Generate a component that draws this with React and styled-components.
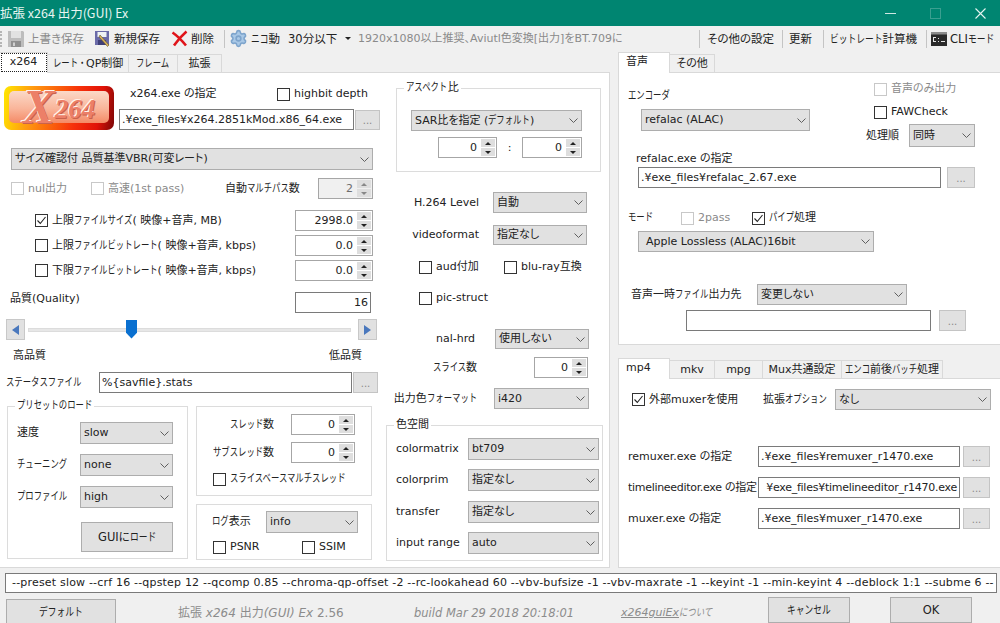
import styled, { createGlobalStyle } from 'styled-components';
import { Settings } from 'lucide-react';

const GlobalStyle = createGlobalStyle`
    * { box-sizing: border-box; }
    html, body {
        margin: 0;
        background: #f0f0f0;
        overflow: hidden;
    }
    body {
        font-family: "DejaVu Sans", "Noto Sans CJK JP", sans-serif;
        font-size: 11px;
        line-height: 14px;
        font-feature-settings: "palt";
        color: #222;
    }
`;

const Window = styled.div`
    width: 1000px;
    height: 623px;
    display: flex;
    flex-direction: column;
    overflow: hidden;
`;

const TitleBar = styled.div`
    height: 26px;
    flex: none;
    background: #008571;
    color: #e8f5f2;
    display: flex;
    align-items: center;
    font-family: "Noto Sans CJK JP", sans-serif;
    font-size: 12.5px;
    white-space: nowrap;
`;
const TitleText = styled.div`
    width: 868px;
    flex: none;
`;
const WinButton = styled.div`
    width: 45px;
    height: 26px;
    flex: none;
    display: flex;
    align-items: center;
    justify-content: center;
`;

const Toolbar = styled.div`
    height: 26px;
    flex: none;
    display: flex;
    align-items: center;
    white-space: nowrap;
    font-size: 11.5px;
    padding-bottom: 1px;
`;
const Grip = styled.div`
    width: 3px;
    height: 16px;
    flex: none;
    border-left: 2px dotted #b5b5b5;
    margin-right: 4px;
`;
const ToolItem = styled.div`
    width: ${(props) => (props.$w ? `${props.$w}px` : 'auto')};
    flex: none;
    display: flex;
    align-items: center;
    gap: 3px;
    margin-left: ${(props) => props.$ml || 0}px;
    color: ${(props) => (props.$dim ? '#8a8a8a' : '#222')};
    font-size: ${(props) => props.$size || 11.5}px;
`;
const ToolSep = styled.div`
    width: 1px;
    height: 18px;
    flex: none;
    background: #c4c4c4;
`;
const Caret = styled.div`
    width: 6px;
    height: 0;
    flex: none;
    border-left: 3px solid transparent;
    border-right: 3px solid transparent;
    border-top: 3px solid #222;
`;

const Main = styled.div`
    display: flex;
    height: 516px;
    flex: none;
`;
const LeftSide = styled.div`
    width: 610px;
    display: flex;
    flex-direction: column;
`;
const RightSide = styled.div`
    width: 382px;
    margin-left: 8px;
    display: flex;
    flex-direction: column;
`;

const TabStrip = styled.div`
    height: 21px;
    flex: none;
    margin-top: ${(props) => props.$mt || 0}px;
    display: flex;
    align-items: flex-end;
    position: relative;
    z-index: 1;
    margin-bottom: -1px;
`;
const Tab = styled.div`
    width: ${(props) => props.$w}px;
    height: ${(props) => (props.$active ? 21 : 19)}px;
    background: ${(props) => (props.$active ? '#fff' : '#f0f0f0')};
    border: 1px solid #d9d9d9;
    border-bottom: ${(props) => (props.$active ? 'none' : '1px solid #d9d9d9')};
    border-left: ${(props) => (props.$first ? 'none' : '1px solid #d9d9d9')};
    margin-right: -1px;
    display: flex;
    align-items: center;
    justify-content: ${(props) => (props.$active ? 'flex-start' : 'center')};
    padding-left: ${(props) => (props.$active ? 7 : 0)}px;
    padding-bottom: ${(props) => (props.$active ? 3 : 0)}px;
    white-space: nowrap;
`;
const FocusTab = styled(Tab)`
    outline: 1px dotted #222;
    outline-offset: -2px;
    justify-content: center;
    padding-left: 0;
    padding-bottom: 2px;
`;
const Panel = styled.div`
    height: ${(props) => props.$h}px;
    flex: none;
    background: #fff;
    border: 1px solid #d9d9d9;
    border-left: ${(props) => (props.$noLeft ? 'none' : '1px solid #d9d9d9')};
    border-right: ${(props) => (props.$noRight ? 'none' : '1px solid #d9d9d9')};
`;
const Columns = styled.div`
    display: flex;
`;
const LeftCol = styled.div`
    width: 385px;
    flex: none;
`;
const MidCol = styled.div`
    width: 224px;
    flex: none;
`;

const Row = styled.div`
    display: flex;
    align-items: ${(props) => props.$align || 'center'};
    height: ${(props) => (props.$h ? `${props.$h}px` : 'auto')};
    margin-top: ${(props) => props.$mt || 0}px;
    padding-left: ${(props) => props.$pl || 0}px;
    padding-right: ${(props) => props.$pr || 0}px;
    padding-bottom: ${(props) => props.$pb || 0}px;
    justify-content: ${(props) => props.$justify || 'flex-start'};
    white-space: nowrap;
`;
const Stack = styled.div`
    width: ${(props) => (props.$w ? `${props.$w}px` : 'auto')};
    flex: none;
    margin-top: ${(props) => props.$mt || 0}px;
    margin-left: ${(props) => props.$ml || 0}px;
`;
const Label = styled.div`
    width: ${(props) => (props.$w ? `${props.$w}px` : 'auto')};
    flex: none;
    text-align: ${(props) => props.$text || 'left'};
    letter-spacing: ${(props) => props.$ls || 0}px;
    color: ${(props) => (props.$dim ? '#8a8a8a' : '#222')};
    white-space: nowrap;
`;

/* Meiryo UI kana are narrow: squeeze the full-width Noto glyphs to match */
const KanaBox = styled.span`
    display: inline-block;
    width: ${(props) => props.$n * 0.76}em;
    white-space: nowrap;
`;
const KanaInner = styled.span`
    display: inline-block;
    font-feature-settings: normal;
    transform: scaleX(0.76);
    transform-origin: left center;
`;
const K = ({ children }) => (
    <KanaBox $n={Array.from(children).length}>
        <KanaInner>{children}</KanaInner>
    </KanaBox>
);

const LogoBox = styled.div`
    width: 110px;
    height: 44px;
    flex: none;
    margin-left: 4px;
    margin-right: 5px;
    padding: 5px 5px 7px;
    border-radius: 7px;
    background: linear-gradient(100deg, #ffe800 0%, #ff9a10 25%, #f6300a 65%, #e01208 85%, #7a0606 100%);
`;
const LogoInner = styled.div`
    height: 100%;
    border-radius: 5px;
    background: linear-gradient(180deg, #fbd9c8 0%, #f9b59a 55%, #f48a66 100%);
    display: flex;
    align-items: center;
    justify-content: center;
    font-family: "Liberation Serif", serif;
    font-style: italic;
    font-weight: 700;
    color: #ec7f68;
    text-shadow: -1px -1px 0 #fff3ec, 1px 1px 0 #c9624c;
    line-height: 1;
`;
const LogoX = styled.span`
    font-size: 48px;
`;
const LogoNum = styled.span`
    font-size: 27px;
    margin-top: 5px;
`;

const Field = styled.div`
    width: ${(props) => props.$w}px;
    height: ${(props) => props.$h || 21}px;
    flex: none;
    background: #fff;
    border: 1px solid #7a7a7a;
    display: flex;
    align-items: center;
    justify-content: ${(props) => (props.$right ? 'flex-end' : 'flex-start')};
    padding: 0 2px;
    letter-spacing: ${(props) => props.$ls || 0}px;
    overflow: hidden;
    white-space: nowrap;
`;
const Browse = styled.div`
    width: ${(props) => props.$w || 25}px;
    height: ${(props) => props.$h || 21}px;
    flex: none;
    margin-left: ${(props) => props.$ml || 1}px;
    background: #e1e1e1;
    border: 1px solid #c4c4c4;
    color: #8a8a8a;
    display: flex;
    justify-content: center;
    align-items: center;
    padding-top: 2px;
    font-size: 10px;
`;
const SelectBox = styled.div`
    width: ${(props) => props.$w}px;
    height: ${(props) => props.$h || 21}px;
    flex: none;
    margin-left: ${(props) => props.$ml || 0}px;
    background: #e1e1e1;
    border: 1px solid #adadad;
    display: flex;
    align-items: center;
    justify-content: space-between;
    padding: 0 3px 0 ${(props) => props.$pad || 3}px;
    white-space: nowrap;
`;
const SpinBox = styled.div`
    width: ${(props) => props.$w}px;
    height: ${(props) => props.$h || 21}px;
    flex: none;
    margin-left: ${(props) => props.$ml || 0}px;
    background: ${(props) => (props.$off ? '#f0f0f0' : '#fff')};
    color: ${(props) => (props.$off ? '#6d6d6d' : '#222')};
    border: 1px solid #a6a6a6;
    display: flex;
    align-items: center;
    justify-content: flex-end;
    white-space: nowrap;
`;
const SpinArrows = styled.div`
    width: 17px;
    height: 100%;
    flex: none;
    margin-left: 2px;
    display: flex;
    flex-direction: column;
    justify-content: center;
    gap: 1px;
    padding: 1px 1px 1px 2px;
`;
const SpinArrow = styled.div`
    flex: 1;
    background: #dedede;
    display: flex;
    align-items: center;
    justify-content: center;
    &::after {
        content: "";
        width: 0;
        height: 0;
        border-left: 3px solid transparent;
        border-right: 3px solid transparent;
        border-${(props) => (props.$down ? 'top' : 'bottom')}: 3px solid ${(props) => (props.$off ? '#888' : '#222')};
    }
`;
const CheckWrap = styled.div`
    width: ${(props) => (props.$w ? `${props.$w}px` : 'auto')};
    flex: none;
    display: flex;
    align-items: center;
    gap: 4px;
    color: ${(props) => (props.$off ? '#8a8a8a' : '#222')};
    white-space: nowrap;
`;
const CheckBox = styled.div`
    width: 13px;
    height: 13px;
    flex: none;
    background: #fff;
    border: 1px solid ${(props) => (props.$off ? '#c8c8c8' : '#333')};
    display: flex;
    align-items: center;
    justify-content: center;
`;

const Group = styled.fieldset`
    width: ${(props) => props.$w}px;
    height: ${(props) => props.$h}px;
    flex: none;
    margin: ${(props) => props.$mt || 0}px 0 0 ${(props) => props.$ml || 0}px;
    padding: 0;
    min-width: 0;
    border: 1px solid #dcdcdc;
`;
const Legend = styled.legend`
    margin-left: 7px;
    padding: 0 2px;
    height: 14px;
    line-height: 14px;
`;
const Box = styled.div`
    width: 176px;
    height: ${(props) => props.$h}px;
    margin-top: ${(props) => props.$mt || 0}px;
    border: 1px solid #dcdcdc;
`;

const ScrollButton = styled.div`
    width: 19px;
    height: 21px;
    flex: none;
    background: #e1e1e1;
    border: 1px solid #c8c8c8;
    display: flex;
    align-items: center;
    justify-content: center;
    &::after {
        content: "";
        width: 0;
        height: 0;
        border-top: 5px solid transparent;
        border-bottom: 5px solid transparent;
        border-${(props) => (props.$right ? 'left' : 'right')}: 7px solid #4a78bd;
    }
`;
const Track = styled.div`
    width: 323px;
    height: 4px;
    flex: none;
    margin: 0 7px 0 3px;
    background: #e7e7e7;
    border: 1px solid #dcdcdc;
    position: relative;
`;
const Thumb = styled.div`
    position: absolute;
    left: 97px;
    top: -9px;
    width: 11px;
    height: 19px;
    background: #0a70d0;
    clip-path: polygon(0 0, 100% 0, 100% 70%, 50% 100%, 0 70%);
`;

const PushButton = styled.div`
    width: ${(props) => props.$w}px;
    height: ${(props) => props.$h}px;
    flex: none;
    margin-left: ${(props) => props.$ml || 0}px;
    margin-top: ${(props) => props.$mt || 0}px;
    background: #e1e1e1;
    border: 1px solid #adadad;
    display: flex;
    align-items: center;
    justify-content: center;
    white-space: nowrap;
    font-size: 11.5px;
`;

const CommandLine = styled.div`
    width: 992px;
    height: 20px;
    flex: none;
    margin: 5px 0 0 5px;
    background: #fff;
    border: 1px solid #7a7a7a;
    display: flex;
    align-items: center;
    padding-left: 6px;
    letter-spacing: 0.19px;
    overflow: hidden;
    white-space: nowrap;
`;
const Footer = styled.div`
    flex: 1;
    display: flex;
    align-items: flex-start;
    white-space: nowrap;
`;
const FooterText = styled.div`
    margin-left: ${(props) => props.$ml}px;
    margin-top: 13px;
    width: ${(props) => props.$w}px;
    flex: none;
    color: #8c8c8c;
    font-size: ${(props) => props.$size || 11}px;
    font-style: ${(props) => (props.$italic ? 'italic' : 'normal')};
    text-decoration: ${(props) => (props.$link ? 'underline' : 'none')};
`;
const Em = styled.span`
    font-style: italic;
`;

const Chevron = () => (
    <svg width="9" height="5" viewBox="0 0 9 5">
        <polyline points="0.5,0.5 4.5,4.5 8.5,0.5" fill="none" stroke="#5f5f5f" strokeWidth="1" />
    </svg>
);

const Select = ({ w, h, ml, pad, children }) => (
    <SelectBox $w={w} $h={h} $ml={ml} $pad={pad}>
        <span>{children}</span>
        <Chevron />
    </SelectBox>
);

const Spin = ({ w, h, ml, off, children }) => (
    <SpinBox $w={w} $h={h} $ml={ml} $off={off}>
        {children}
        <SpinArrows>
            <SpinArrow $off={off} />
            <SpinArrow $down $off={off} />
        </SpinArrows>
    </SpinBox>
);

const Check = ({ w, checked, off, children }) => (
    <CheckWrap $w={w} $off={off}>
        <CheckBox $off={off}>
            {checked && (
                <svg width="11" height="11" viewBox="0 0 11 11">
                    <polyline points="1.5,5.5 4.3,8.5 9.5,2" fill="none" stroke="#222" strokeWidth="1.1" />
                </svg>
            )}
        </CheckBox>
        <span>{children}</span>
    </CheckWrap>
);

const FloppyIcon = () => (
    <svg width="18" height="18" viewBox="0 0 18 18">
        <path d="M1 1h15l1 1v15H1z" fill="#bdbdbd" />
        <rect x="4" y="1" width="10" height="7" fill="#e2e2e2" />
        <rect x="4" y="11" width="10" height="6" fill="#8f8f8f" />
        <rect x="6" y="12.5" width="2" height="3.5" fill="#d0d0d0" />
    </svg>
);

const SaveAsIcon = () => (
    <svg width="17" height="17" viewBox="0 0 17 17">
        <path d="M1 1h14v14H1z" fill="#6a6aa8" />
        <rect x="3.5" y="2" width="9" height="5" fill="#eef2f4" />
        <rect x="4" y="10" width="8" height="5" fill="#3f3f78" />
        <path d="M6 5l9 10-1.5 1.5L5 7z" fill="#d9b35a" stroke="#5d5030" strokeWidth="0.6" />
    </svg>
);

const RedXIcon = () => (
    <svg width="17" height="17" viewBox="0 0 17 17">
        <path d="M1.5 2.5Q8 7 15 15.5M15.500 1.500Q9 7 3 15.500" fill="none" stroke="#e0141a" strokeWidth="2.600" />
    </svg>
);

const CliIcon = () => (
    <svg width="16" height="14" viewBox="0 0 16 14">
        <rect width="16" height="14" fill="#2a2a2a" />
        <rect width="16" height="2.500" fill="#8c8c8c" />
        <path d="M2 5h3v1H3v3h2v1H2zM7 6h1v1H7zM7 9h1v1H7zM10 9h4v1h-4z" fill="#e6e6e6" />
    </svg>
);

const App = () => (
    <Window>
        <GlobalStyle />
        <TitleBar>
            <TitleText>拡張 x264 出力(GUI) Ex</TitleText>
            <WinButton>
                <svg width="11" height="11" viewBox="0 0 11 11"><line x1="0" y1="5.500" x2="11" y2="5.500" stroke="#cfe8e3" /></svg>
            </WinButton>
            <WinButton>
                <svg width="11" height="11" viewBox="0 0 11 11"><rect x="0.500" y="0.500" width="10" height="10" fill="none" stroke="#3a9f90" /></svg>
            </WinButton>
            <WinButton>
                <svg width="11" height="11" viewBox="0 0 11 11"><path d="M0.500 0.500L10.500 10.500M10.500 0.500L0.500 10.500" stroke="#e6f4f1" strokeWidth="1.100" /></svg>
            </WinButton>
        </TitleBar>

        <Toolbar>
            <Grip />
            <ToolItem $w={87} $dim><FloppyIcon /><span>上書き保存</span></ToolItem>
            <ToolItem $w={77}><SaveAsIcon /><span>新規保存</span></ToolItem>
            <ToolItem $w={53}><RedXIcon /><span>削除</span></ToolItem>
            <ToolSep />
            <ToolItem $w={59} $ml={4}>
                <Settings size={19} color="#7da4cc" fill="#a9c8e6" strokeWidth={2} />
                <span><K>ニコ</K>動</span>
            </ToolItem>
            <ToolItem $w={57}>30分以下</ToolItem>
            <Caret />
            <ToolItem $w={341} $ml={7} $dim $size={11}>1920x1080以上推奨、Aviutl色変換[出力]をBT.709に</ToolItem>
            <ToolSep />
            <ToolItem $w={75} $ml={7}>その他の設定</ToolItem>
            <ToolSep />
            <ToolItem $w={34} $ml={6}>更新</ToolItem>
            <ToolSep />
            <ToolItem $w={96} $ml={6}><span><K>ビットレート</K>計算機</span></ToolItem>
            <ToolSep />
            <ToolItem $ml={4}><CliIcon /><span>CLI<K>モード</K></span></ToolItem>
        </Toolbar>

        <Main>
            <LeftSide>
                <TabStrip>
                    <FocusTab $w={48} $active $first>x264</FocusTab>
                    <Tab $w={82}><span><K>レート・</K>QP制御</span></Tab>
                    <Tab $w={50}><K>フレーム</K></Tab>
                    <Tab $w={45}>拡張</Tab>
                </TabStrip>
                <Panel $h={496} $noLeft>
                    <Columns>
                        <LeftCol>
                            <Row $mt={13} $align="flex-start">
                                <LogoBox>
                                    <LogoInner><LogoX>X</LogoX><LogoNum>264</LogoNum></LogoInner>
                                </LogoBox>
                                <Stack $mt={1}>
                                    <Row $pl={11} $h={22} $pb={8}>
                                        <Label $w={147}>x264.exe の指定</Label>
                                        <Check>highbit depth</Check>
                                    </Row>
                                    <Row>
                                        <Field $w={235}>.¥exe_files¥x264.2851kMod.x86_64.exe</Field>
                                        <Browse $h={20}>...</Browse>
                                    </Row>
                                </Stack>
                            </Row>
                            <Row $mt={18} $pl={11}>
                                <Select w={362} h={22}>サイズ確認付 品質基準VBR(可変レート)</Select>
                            </Row>
                            <Row $mt={8} $pl={11}>
                                <Check w={80} off>nul出力</Check>
                                <Check w={134} off>高速(1st pass)</Check>
                                <Label $w={93}>自動<K>マルチパス</K>数</Label>
                                <Spin w={55} off>2</Spin>
                            </Row>
                            <Row $mt={11} $pl={35}>
                                <Check w={260} checked>上限<K>ファイルサイズ</K>( 映像+音声, MB)</Check>
                                <Spin w={78}>2998.0</Spin>
                            </Row>
                            <Row $mt={4} $pl={35}>
                                <Check w={260}>上限<K>ファイルビットレート</K>( 映像+音声, kbps)</Check>
                                <Spin w={78}>0.0</Spin>
                            </Row>
                            <Row $mt={4} $pl={35}>
                                <Check w={260}>下限<K>ファイルビットレート</K>( 映像+音声, kbps)</Check>
                                <Spin w={78}>0.0</Spin>
                            </Row>
                            <Row $mt={11} $pl={10} $align="flex-start">
                                <Label $w={285}>品質(Quality)</Label>
                                <Field $w={76} $right>16</Field>
                            </Row>
                            <Row $mt={6} $pl={6}>
                                <ScrollButton />
                                <Track><Thumb /></Track>
                                <ScrollButton $right />
                            </Row>
                            <Row $mt={9} $pl={13} $pr={23} $justify="space-between">
                                <Label>高品質</Label>
                                <Label>低品質</Label>
                            </Row>
                            <Row $mt={9} $pl={6}>
                                <Label $w={93}><K>ステータスファイル</K></Label>
                                <Field $w={253}>%&#123;savfile&#125;.stats</Field>
                                <Browse>...</Browse>
                            </Row>
                            <Row $mt={6} $pl={7} $align="flex-start">
                                <Group $w={181} $h={160}>
                                    <Legend><K>プリセットのロード</K></Legend>
                                    <Row $mt={9} $pl={9}>
                                        <Label $w={63}>速度</Label>
                                        <Select w={93} h={22}>slow</Select>
                                    </Row>
                                    <Row $mt={10} $pl={9}>
                                        <Label $w={63}><K>チューニング</K></Label>
                                        <Select w={93} h={22}>none</Select>
                                    </Row>
                                    <Row $mt={10} $pl={9}>
                                        <Label $w={63}><K>プロファイル</K></Label>
                                        <Select w={93} h={22}>high</Select>
                                    </Row>
                                    <Row $mt={14} $pl={73}>
                                        <PushButton $w={92} $h={30}>GUIに<K>ロード</K></PushButton>
                                    </Row>
                                </Group>
                                <Stack $mt={7} $ml={8}>
                                    <Box $h={90}>
                                        <Row $mt={7}>
                                            <Label $w={77} $text="right"><K>スレッド</K>数</Label>
                                            <Spin w={64} ml={17}>0</Spin>
                                        </Row>
                                        <Row $mt={7}>
                                            <Label $w={77} $text="right"><K>サブスレッド</K>数</Label>
                                            <Spin w={64} ml={17}>0</Spin>
                                        </Row>
                                        <Row $mt={9} $pl={16}>
                                            <Check><K>スライスベースマルチスレッド</K></Check>
                                        </Row>
                                    </Box>
                                    <Box $h={56} $mt={8}>
                                        <Row $mt={6} $pl={15}>
                                            <Label $w={54}><K>ログ</K>表示</Label>
                                            <Select w={92} h={22}>info</Select>
                                        </Row>
                                        <Row $mt={7} $pl={16}>
                                            <Check w={89}>PSNR</Check>
                                            <Check>SSIM</Check>
                                        </Row>
                                    </Box>
                                </Stack>
                            </Row>
                        </LeftCol>
                        <MidCol>
                            <Group $w={205} $h={91} $mt={8} $ml={11}>
                                <Legend><K>アスペクト</K>比</Legend>
                                <Row $mt={15} $pl={14}>
                                    <Select w={171} h={21}>SAR比を指定 (<K>デフォルト</K>)</Select>
                                </Row>
                                <Row $mt={6} $pl={41}>
                                    <Spin w={59}>0</Spin>
                                    <Label $w={25} $text="center">:</Label>
                                    <Spin w={60}>0</Spin>
                                </Row>
                            </Group>
                            <Row $mt={20}>
                                <Label $w={94} $text="right">H.264 Level</Label>
                                <Select w={94} ml={14}>自動</Select>
                            </Row>
                            <Row $mt={12}>
                                <Label $w={94} $text="right">videoformat</Label>
                                <Select w={94} h={20} ml={14}>指定なし</Select>
                            </Row>
                            <Row $mt={15} $pl={34}>
                                <Check w={85}>aud付加</Check>
                                <Check>blu-ray互換</Check>
                            </Row>
                            <Row $mt={17} $pl={34}>
                                <Check>pic-struct</Check>
                            </Row>
                            <Row $mt={24}>
                                <Label $w={90} $text="right">nal-hrd</Label>
                                <Select w={94} h={20} ml={20}>使用しない</Select>
                            </Row>
                            <Row $mt={8}>
                                <Label $w={92} $text="right"><K>スライス</K>数</Label>
                                <Spin w={54} ml={57}>0</Spin>
                            </Row>
                            <Row $mt={10}>
                                <Label $w={92} $text="right">出力色<K>フォーマット</K></Label>
                                <Select w={95} ml={17}>i420</Select>
                            </Row>
                            <Group $w={217} $h={143} $mt={9} $ml={1}>
                                <Legend>色空間</Legend>
                                <Row $mt={6} $pl={9}>
                                    <Label $w={72}>colormatrix</Label>
                                    <Select w={131} h={22}>bt709</Select>
                                </Row>
                                <Row $mt={9} $pl={9}>
                                    <Label $w={72}>colorprim</Label>
                                    <Select w={131} h={22}>指定なし</Select>
                                </Row>
                                <Row $mt={10} $pl={9}>
                                    <Label $w={72}>transfer</Label>
                                    <Select w={131} h={22}>指定なし</Select>
                                </Row>
                                <Row $mt={9} $pl={9}>
                                    <Label $w={72}>input range</Label>
                                    <Select w={131} h={22}>auto</Select>
                                </Row>
                            </Group>
                        </MidCol>
                    </Columns>
                </Panel>
            </LeftSide>

            <RightSide>
                <TabStrip>
                    <Tab $w={52} $active>音声</Tab>
                    <Tab $w={46}>その他</Tab>
                </TabStrip>
                <Panel $h={273} $noRight>
                    <Row $mt={9} $align="flex-start">
                        <Stack $w={247}>
                            <Row $mt={7} $pl={9}>
                                <Label><K>エンコーダ</K></Label>
                            </Row>
                            <Row $mt={6} $pl={22}>
                                <Select w={169} h={22}>refalac (ALAC)</Select>
                            </Row>
                        </Stack>
                        <Stack>
                            <Row $pl={8}><Check off>音声のみ出力</Check></Row>
                            <Row $mt={9} $pl={8}><Check>FAWCheck</Check></Row>
                            <Row $mt={5}>
                                <Label $w={43}>処理順</Label>
                                <Select w={66} h={23}>同時</Select>
                            </Row>
                        </Stack>
                    </Row>
                    <Row $mt={5} $pl={17}><Label>refalac.exe の指定</Label></Row>
                    <Row $mt={1} $pl={19}>
                        <Field $w={303}>.¥exe_files¥refalac_2.67.exe</Field>
                        <Browse $w={28} $ml={6}>...</Browse>
                    </Row>
                    <Row $mt={23} $pl={9}>
                        <Label $w={53}><K>モード</K></Label>
                        <Check w={71} off>2pass</Check>
                        <Check checked><K>パイプ</K>処理</Check>
                    </Row>
                    <Row $mt={6} $pl={19}>
                        <Select w={236} pad={7}>Apple Lossless (ALAC)16bit</Select>
                    </Row>
                    <Row $mt={32} $pl={12}>
                        <Label $w={126}>音声一時<K>ファイル</K>出力先</Label>
                        <Select w={150}>変更しない</Select>
                    </Row>
                    <Row $mt={5} $pl={67}>
                        <Field $w={245} />
                        <Browse $w={27} $ml={8}>...</Browse>
                    </Row>
                </Panel>
                <TabStrip $mt={13}>
                    <Tab $w={52} $active>mp4</Tab>
                    <Tab $w={46}>mkv</Tab>
                    <Tab $w={49}>mpg</Tab>
                    <Tab $w={80}>Mux共通設定</Tab>
                    <Tab $w={102}><span><K>エンコ</K>前後<K>バッチ</K>処理</span></Tab>
                </TabStrip>
                <Panel $h={190} $noRight>
                    <Row $mt={10} $pl={13}>
                        <Check w={131} checked>外部muxerを使用</Check>
                        <Label $w={72}>拡張<K>オプション</K></Label>
                        <Select w={156}>なし</Select>
                    </Row>
                    <Row $mt={36} $pl={9}>
                        <Label $w={130}>remuxer.exe の指定</Label>
                        <Field $w={202}>.¥exe_files¥remuxer_r1470.exe</Field>
                        <Browse $w={27} $ml={3}>...</Browse>
                    </Row>
                    <Row $mt={10} $pl={9}>
                        <Label $w={130} $ls={-0.3}>timelineeditor.exe の指定</Label>
                        <Field $w={202} $right $ls={-0.25}>¥exe_files¥timelineeditor_r1470.exe</Field>
                        <Browse $w={27} $ml={3}>...</Browse>
                    </Row>
                    <Row $mt={10} $pl={9}>
                        <Label $w={130}>muxer.exe の指定</Label>
                        <Field $w={202}>.¥exe_files¥muxer_r1470.exe</Field>
                        <Browse $w={27} $ml={3}>...</Browse>
                    </Row>
                </Panel>
            </RightSide>
        </Main>

        <CommandLine>--preset slow --crf 16 --qpstep 12 --qcomp 0.85 --chroma-qp-offset -2 --rc-lookahead 60 --vbv-bufsize -1 --vbv-maxrate -1 --keyint -1 --min-keyint 4 --deblock 1:1 --subme 6 --</CommandLine>
        <Footer>
            <PushButton $w={110} $h={26} $ml={6} $mt={6}><K>デフォルト</K></PushButton>
            <FooterText $ml={62} $w={236} $size={12}>拡張 <Em>x264</Em> 出力<Em>(GUI) Ex</Em> 2.56</FooterText>
            <FooterText $ml={0} $w={207} $size={11.5} $italic>build Mar 29 2018 20:18:01</FooterText>
            <FooterText $ml={0} $w={147} $italic $link>x264guiEx<K>について</K></FooterText>
            <PushButton $w={82} $h={26} $mt={4}><K>キャンセル</K></PushButton>
            <PushButton $w={82} $h={26} $ml={40} $mt={4}>OK</PushButton>
        </Footer>
    </Window>
);

export default App;
